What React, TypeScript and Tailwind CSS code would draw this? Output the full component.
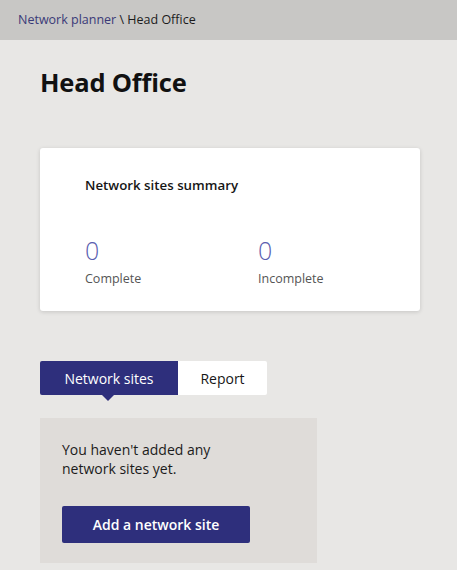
const font = { fontFamily: '"Open Sans", "Noto Sans", sans-serif' };

const Stat = ({ value, label }: { value: number; label: string }) => (
  <div className="flex flex-col">
    <span className="text-[25px] leading-[28px] font-light text-[#5b5fb0]">{value}</span>
    <span className="mt-[7px] text-[12.5px] leading-[16px] text-[#555]">{label}</span>
  </div>
);

export default function App() {
  return (
    <div className="w-[457px] h-[570px] bg-[#e8e7e5] overflow-hidden" style={font}>
      <div className="h-[40px] bg-[#c8c7c5] flex items-center px-[18px] text-[12.5px] text-[#1b1b1b]">
        <span className="text-[#3a3a78]">Network planner</span>
        <span>&nbsp;\ Head Office</span>
      </div>

      <div className="px-[40px]">
        <h1 className="mt-[26px] text-[25.5px] leading-[32px] font-bold text-[#111] tracking-[-0.2px]">
          Head Office
        </h1>

        <div className="mt-[50px] w-[380px] h-[163px] bg-white rounded-[3px] shadow-[0_1px_4px_rgba(0,0,0,0.15)] pl-[45px] pt-[28px]">
          <div className="text-[13.3px] leading-[18px] font-semibold text-[#161616]">Network sites summary</div>
          <div className="mt-[42px] flex">
            <div className="w-[173px]">
              <Stat value={0} label="Complete" />
            </div>
            <Stat value={0} label="Incomplete" />
          </div>
        </div>

        <div className="mt-[50px] flex">
          <div className="relative w-[138px] h-[34px] bg-[#2e2f7c] text-white text-[14px] flex items-center justify-center rounded-l-[2px]">
            Network sites
            <div className="absolute left-[62px] -bottom-[6px] w-0 h-0 border-l-[6px] border-r-[6px] border-t-[6px] border-l-transparent border-r-transparent border-t-[#2e2f7c]" />
          </div>
          <div className="w-[89px] h-[34px] bg-white text-[#161616] text-[14px] flex items-center justify-center rounded-r-[2px]">
            Report
          </div>
        </div>

        <div className="mt-[23px] w-[277px] h-[145px] bg-[#dfdcd9] pl-[22px] pt-[22px]">
          <p className="text-[14px] leading-[19px] text-[#1b1b1b] w-[180px]">
            You haven't added any network sites yet.
          </p>
          <button className="mt-[28px] w-[188px] h-[37px] bg-[#2e2f7c] text-white text-[14px] font-semibold rounded-[2px]">
            Add a network site
          </button>
        </div>
      </div>
    </div>
  );
}
